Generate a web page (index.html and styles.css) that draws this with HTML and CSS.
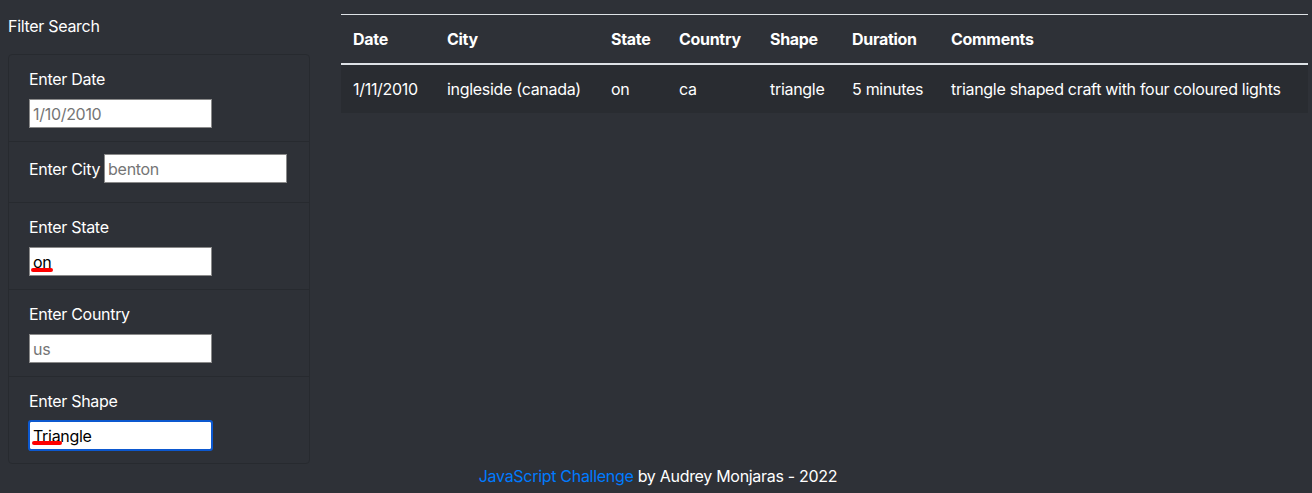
FILE: index.html
```html
<!DOCTYPE html>
<html lang="en">
<head>
<meta charset="utf-8">
<title>UFO Sightings</title>
<link rel="stylesheet" href="styles.css">
</head>
<body>
<div class="page">
  <div class="row">
    <aside class="sidebar">
      <p class="filter-title">Filter Search</p>
      <ul class="filters">
        <li class="filter-item">
          <label class="stacked" for="datetime">Enter Date</label>
          <span class="field-wrap">
            <input class="field" id="datetime" type="text" placeholder="1/10/2010">
          </span>
        </li>
        <li class="filter-item inline-item">
          <label class="inline" for="city">Enter City</label>
          <input class="field" id="city" type="text" placeholder="benton">
        </li>
        <li class="filter-item">
          <label class="stacked" for="state">Enter State</label>
          <span class="field-wrap">
            <input class="field" id="state" type="text" value="on" spellcheck="false">
            <span class="spell spell-on"></span>
          </span>
        </li>
        <li class="filter-item">
          <label class="stacked" for="country">Enter Country</label>
          <span class="field-wrap">
            <input class="field" id="country" type="text" placeholder="us">
          </span>
        </li>
        <li class="filter-item">
          <label class="stacked" for="shape">Enter Shape</label>
          <span class="field-wrap">
            <input class="field focused" id="shape" type="text" value="Triangle" spellcheck="false">
            <span class="spell spell-tri"></span>
          </span>
        </li>
      </ul>
    </aside>
    <main class="results">
      <table class="ufo-table">
        <colgroup>
          <col class="c-date"><col class="c-city"><col class="c-state"><col class="c-country"><col class="c-shape"><col class="c-duration"><col class="c-comments">
        </colgroup>
        <thead>
          <tr>
            <th>Date</th><th>City</th><th>State</th><th>Country</th><th>Shape</th><th>Duration</th><th>Comments</th>
          </tr>
        </thead>
        <tbody>
          <tr>
            <td>1/11/2010</td><td>ingleside (canada)</td><td>on</td><td>ca</td><td>triangle</td><td>5 minutes</td><td>triangle shaped craft with four coloured lights</td>
          </tr>
        </tbody>
      </table>
    </main>
  </div>
  <footer class="footer"><a href="#" class="footer-link">JavaScript Challenge</a> by Audrey Monjaras - 2022</footer>
</div>
</body>
</html>
```

FILE: styles.css
```css
* { box-sizing: border-box; }
html, body { margin: 0; padding: 0; }
body {
  background: #2e3137;
  color: #ffffff;
  font-family: Inter, "Liberation Sans", sans-serif;
  font-size: 16px;
  line-height: 24px;
  letter-spacing: -0.3px;
  width: 1312px;
  height: 493px;
  overflow: hidden;
}
.page { padding: 14px 4px 0 8px; }
.row { display: flex; gap: 31px; }
.sidebar { width: 302px; flex: none; }
.filter-title { margin: 0 0 16px 0; line-height: 24px; }
.filters {
  list-style: none;
  margin: 0;
  padding: 0;
  border: 1px solid #272a2f;
  border-radius: 4px;
}
.filter-item {
  padding: 12px 20px 13px;
  border-top: 1px solid #272a2f;
}
.filter-item:first-child { border-top: none; }
.inline-item {
  display: flex;
  align-items: center;
  gap: 4px;
  white-space: nowrap;
  padding-top: 12px;
  padding-bottom: 19px;
}
.stacked { display: block; margin-bottom: 8px; }
.inline { display: block; }
.field-wrap { position: relative; display: block; width: 183px; height: 29px; }
.field {
  display: block;
  width: 183px;
  height: 29px;
  border: 1px solid #8a8a8a;
  background: #ffffff;
  color: #000000;
  font-family: inherit;
  letter-spacing: -0.3px;
  font-size: 16px;
  padding: 1px 3px;
  margin: 0;
  border-radius: 0;
  outline: none;
  flex: none;
}
.field::placeholder { color: #757575; }
.field.focused {
  outline: 2px solid #0c58cf;
  outline-offset: -1px;
  border-radius: 2px;
}
.spell {
  position: absolute;
  height: 4px;
  background: #ff0000;
  border-radius: 2px;
}
.spell-on { left: 2px; width: 22px; top: 21px; }
.spell-tri { left: 3px; width: 30px; top: 20px; }
.results { flex: 1; }
.ufo-table {
  width: 967px;
  border-collapse: collapse;
  table-layout: fixed;
  color: #ffffff;
}
.c-date { width: 94px; }
.c-city { width: 164px; }
.c-state { width: 68px; }
.c-country { width: 91px; }
.c-shape { width: 82px; }
.c-duration { width: 99px; }
.c-comments { width: 369px; }
.ufo-table th, .ufo-table td {
  text-align: left;
  padding: 12px;
  white-space: nowrap;
  line-height: 24px;
}
.ufo-table thead th {
  font-weight: 700;
  border-top: 1px solid #dee2e6;
  border-bottom: 2px solid #dee2e6;
}
.ufo-table tbody tr { background: #292c31; }
.footer { text-align: center; line-height: 24px; padding-top: 0; }
.footer-link { color: #007bff; text-decoration: none; }
```
